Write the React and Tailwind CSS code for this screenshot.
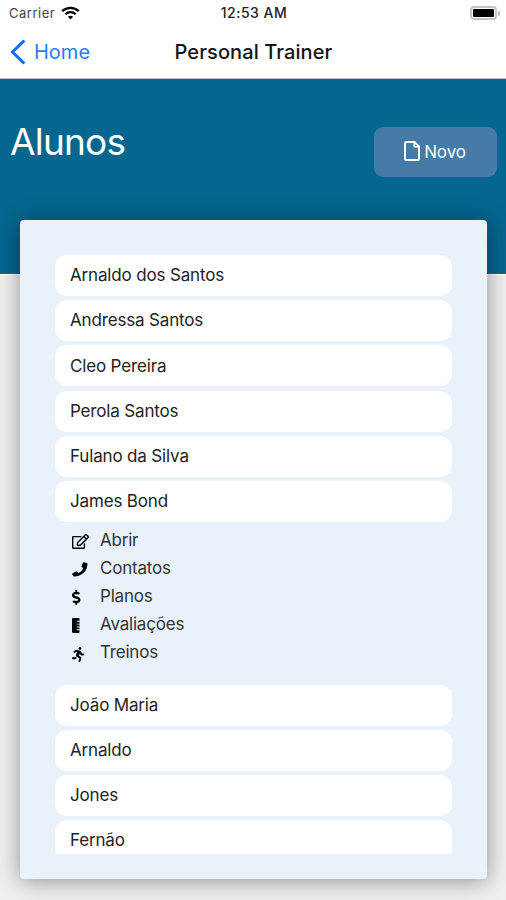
import {
  FaDollarSign,
  FaRegEdit,
  FaRulerVertical,
  FaRunning,
} from "react-icons/fa";

function PhoneIcon(props) {
  return (
    <svg viewBox="0 0 16 15" fill="currentColor" {...props}>
      <path d="M.6 11.2 4 9.6c.4-.2.8-.1 1.100.2l1.200 1.300c2.300-1 4-2.600 5-4.900L9.800 4.900c-.3-.3-.4-.7-.2-1.100L11 .8c.2-.4.6-.6 1-.5l2.800.7c.4.1.7.4.7.8C15.500 8.800 9.700 14.600 2.200 14.600c-.4 0-.8-.3-.9-.7L.2 12.200c-.1-.4 0-.8.4-1z" />
    </svg>
  );
}

function FileIcon(props) {
  return (
    <svg viewBox="0 0 16 20" fill="none" stroke="currentColor" strokeWidth="2" strokeLinejoin="round" {...props}>
      <path d="M2.5 1h8L15 5.5v12a1.5 1.5 0 0 1-1.5 1.5h-11A1.5 1.5 0 0 1 1 17.5v-15A1.5 1.5 0 0 1 2.5 1z" />
      <path d="M10.3 1.2v4.500h4.500" strokeWidth="1.6" />
    </svg>
  );
}

const alunos = [
  { nome: "Arnaldo dos Santos" },
  { nome: "Andressa Santos" },
  { nome: "Cleo Pereira" },
  { nome: "Perola Santos" },
  { nome: "Fulano da Silva" },
  { nome: "James Bond", aberto: true },
  { nome: "João Maria" },
  { nome: "Arnaldo" },
  { nome: "Jones" },
  { nome: "Fernão" },
];

const acoes = [
  { label: "Abrir", Icon: FaRegEdit },
  { label: "Contatos", Icon: PhoneIcon },
  { label: "Planos", Icon: FaDollarSign },
  { label: "Avaliações", Icon: FaRulerVertical },
  { label: "Treinos", Icon: FaRunning },
];

function StatusBar() {
  return (
    <div className="grid h-[26px] grid-cols-3 items-center pl-[9px] pr-[6px] text-[13px] text-[#222]">
      <div className="flex items-center gap-[6px]">
        <span className="pt-px tracking-[0.5px] text-[#444]">Carrier</span>
        <svg width="19" height="14" viewBox="0 0 19 14" fill="none" stroke="#000">
          <path d="M1.2 5.2C5.9 .7 13.1 .7 17.8 5.2" strokeWidth="2.3" />
          <path d="M4.3 8.3c3-2.8 7.4-2.8 10.4 0" strokeWidth="2.2" />
          <path d="M9.5 13.4 6.9 10.8c1.5-1.4 3.7-1.4 5.2 0z" fill="#000" stroke="none" />
        </svg>
      </div>
      <span className="-mt-px -ml-px text-center text-[14px] font-medium tracking-[0.5px]">12:53 AM</span>
      <div className="flex items-center justify-end">
        <div className="h-[14px] w-[27px] rounded-[4px] border-2 border-[#c4c4c4] bg-white p-px">
          <div className="h-full rounded-[1px] bg-black" />
        </div>
        <div className="ml-px h-[5px] w-[2px] rounded-r-full bg-[#b5b5b5]" />
      </div>
    </div>
  );
}

function NavBar() {
  return (
    <div className="grid h-[53px] grid-cols-[1fr_auto_1fr] items-center border-b border-[#b9c4ca] px-[10px]">
      <button className="flex items-center gap-[8px] text-[20px] text-[#2b7cf6]">
        <svg width="16" height="26" viewBox="0 0 16 26" fill="none" stroke="#0a6cf5" strokeWidth="3">
          <path d="M14.3 1.5 2.5 13l11.8 11.5" />
        </svg>
        Home
      </button>
      <h1 className="pl-px text-[20px] font-medium tracking-[0.1px] text-[#141414]">Personal Trainer</h1>
    </div>
  );
}

function Acoes() {
  return (
    <ul className="mt-[1px] mb-[18px] pl-[17px]">
      {acoes.map(({ label, Icon }) => (
        <li key={label} className="flex h-[28.1px] items-center">
          <span className="flex w-[28px] pt-[3px]">
            <Icon className="h-[15px] w-[17px] text-black" preserveAspectRatio="xMinYMid meet" />
          </span>
          <span className="pt-px text-[17px] tracking-[-0.2px] text-[#333]">{label}</span>
        </li>
      ))}
    </ul>
  );
}

export default function App() {
  return (
    <div className="h-[900px] w-[506px] overflow-hidden bg-[#efefef] font-['Inter',sans-serif]">
      <header className="bg-white">
        <StatusBar />
        <NavBar />
      </header>

      <section className="flex h-[196px] items-start justify-between border-b border-white bg-[#05668f] pl-[10px] pr-[9px]">
        <h2 className="mt-[39px] text-[37px] leading-[48px] tracking-[-0.8px] text-white">Alunos</h2>
        <button className="mt-[48px] flex h-[50px] w-[123px] items-center justify-center gap-[4px] rounded-[9px] bg-[#457ba6] pr-px text-[17px] text-white">
          <FileIcon className="mb-[2px] h-[20px] w-[16px]" />
          <span className="pt-[2px] tracking-[-0.1px]">Novo</span>
        </button>
      </section>

      <main className="relative mx-[20px] -mt-[55px] h-[658.5px] w-[467px] rounded-[4px] bg-[#e9f1fb] px-[35px] pt-[35px] shadow-[0_2px_22px_rgba(0,0,0,0.4)]">
        <ul className="h-[599px] overflow-hidden">
          {alunos.map(({ nome, aberto }) => (
            <li key={nome}>
              <div className="mb-[4.2px] flex h-[41px] items-center rounded-[12px] bg-white pt-px pl-[15px] text-[17px] tracking-[-0.16px] text-[#222]">
                {nome}
              </div>
              {aberto && <Acoes />}
            </li>
          ))}
        </ul>
      </main>
    </div>
  );
}
